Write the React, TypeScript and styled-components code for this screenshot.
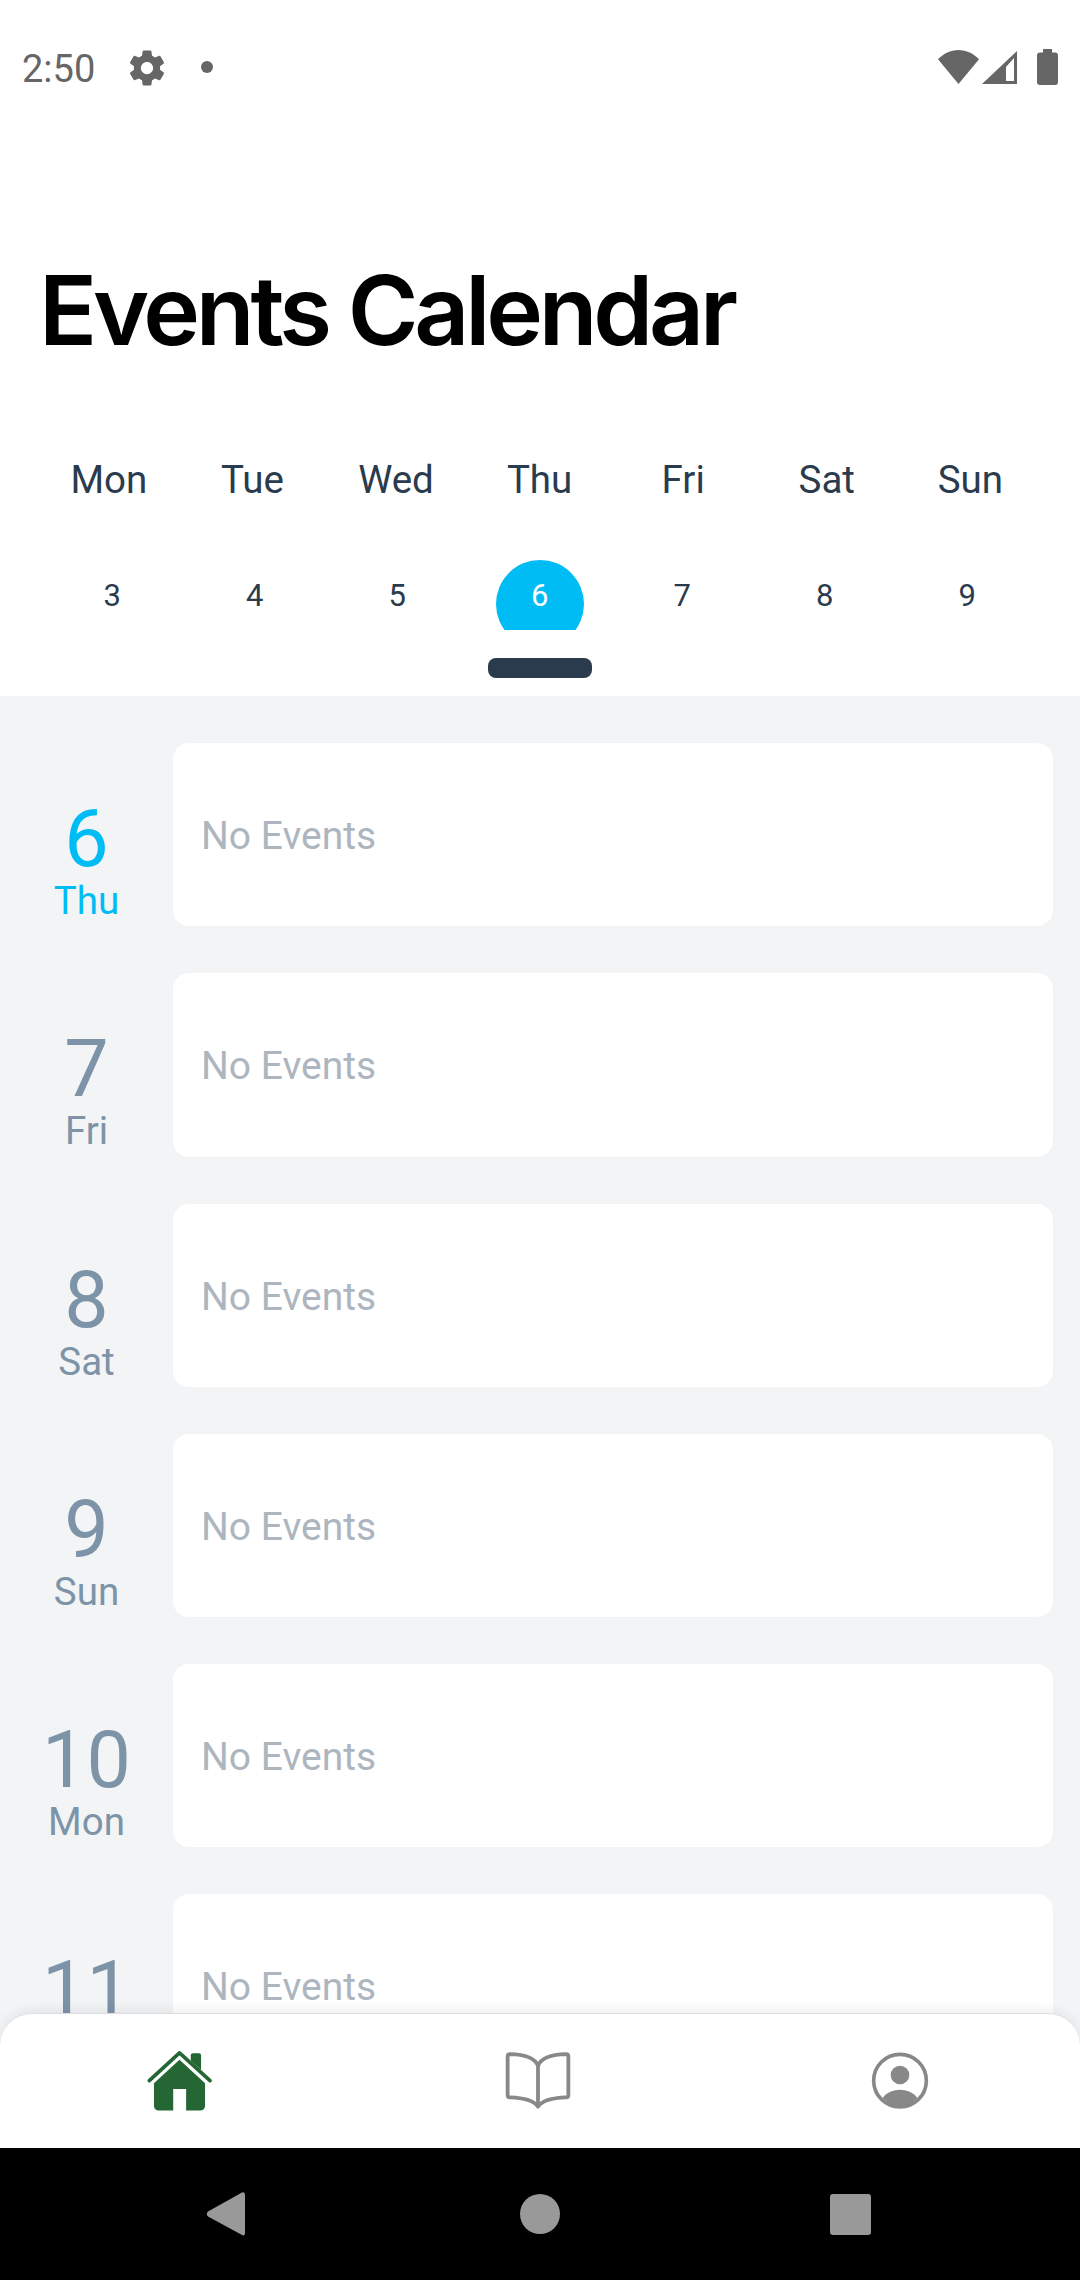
import React from 'react';
import styled, { createGlobalStyle } from 'styled-components';

const GlobalStyle = createGlobalStyle`
  html, body {
    margin: 0;
    padding: 0;
    background: #fff;
  }
  * {
    box-sizing: border-box;
  }
`;

const Screen = styled.div`
  width: 1080px;
  height: 2280px;
  display: flex;
  flex-direction: column;
  overflow: hidden;
  background: #fff;
  font-family: Roboto, 'Liberation Sans', sans-serif;
`;

const StatusBar = styled.div`
  height: 136px;
  flex: none;
  display: flex;
  align-items: flex-start;
  padding: 50px 22px 0 22px;
`;

const Clock = styled.span`
  font-size: 38px;
  line-height: 38px;
  width: 103.5px;
  color: #666;
`;

const StatusDot = styled.span`
  width: 12px;
  height: 12px;
  margin: 11px 0 0 33.5px;
  border-radius: 50%;
  background: #666;
`;

const StatusRight = styled.div`
  margin-left: auto;
  display: flex;
`;

const Glyph = styled.svg<{ $left?: number; $top?: number }>`
  display: block;
  flex: none;
  fill: #666;
  margin-left: ${(p) => p.$left ?? 0}px;
  margin-top: ${(p) => p.$top ?? 0}px;
`;

const Header = styled.header`
  height: 560px;
  flex: none;
  display: flex;
  flex-direction: column;
`;

const Title = styled.h1`
  margin: 0;
  padding: 126px 0 0 39px;
  font-family: Inter, 'Liberation Sans', sans-serif;
  font-size: 96px;
  line-height: 96px;
  font-weight: 600;
  letter-spacing: -4.2px;
  color: #000;
  white-space: nowrap;
`;

const WeekRow = styled.div`
  display: grid;
  grid-template-columns: repeat(7, 143.6px);
  padding-left: 37px;
  height: 82px;
  margin-top: 81px;
  align-items: center;
`;

const WeekLabel = styled.span`
  text-align: center;
  font-size: 38.5px;
  line-height: 44px;
  color: #2a3b4d;
`;

const DateRow = styled.div`
  display: grid;
  grid-template-columns: repeat(7, 142.5px);
  padding-left: 41px;
  margin-top: 39px;
  height: 70px;
`;

const DateCell = styled.div`
  position: relative;
  display: flex;
  justify-content: center;
  align-items: center;
  height: 70px;
  overflow: hidden;
`;

const TodayDisc = styled.span`
  position: absolute;
  top: 0;
  left: 50%;
  width: 88px;
  height: 88px;
  margin-left: -44px;
  border-radius: 50%;
  background: #00bcf5;
`;

const DateNumber = styled.span<{ $today?: boolean }>`
  position: relative;
  font-size: 31px;
  line-height: 36px;
  margin-top: 2px;
  color: ${(p) => (p.$today ? '#fff' : '#2a3b4d')};
`;

const Indicator = styled.div`
  width: 104px;
  height: 20px;
  margin: 28px 0 0 488px;
  border-radius: 8px;
  background: #2a3b4d;
`;

const List = styled.main`
  flex: 1;
  min-height: 0;
  overflow: hidden;
  background: #f2f4f6;
  padding: 47px 27px 0 0;
  display: flex;
  flex-direction: column;
  gap: 47px;
`;

const Row = styled.section`
  display: flex;
  flex: none;
  height: 183.25px;
`;

const DateBlock = styled.div<{ $today?: boolean }>`
  width: 173px;
  flex: none;
  display: flex;
  flex-direction: column;
  align-items: center;
  padding-top: 65px;
  color: ${(p) => (p.$today ? '#00bcf5' : '#7d93a8')};
`;

const DayOfMonth = styled.span`
  font-size: 79px;
  line-height: 62px;
`;

const DayName = styled.span`
  font-size: 38.5px;
  line-height: 42px;
  margin-top: 10px;
`;

const Card = styled.div`
  flex: 1;
  display: flex;
  align-items: center;
  padding: 3px 0 0 28px;
  border-radius: 16px;
  background: #fff;
  font-size: 39px;
  color: #adb6bf;
`;

const TabBar = styled.nav`
  height: 135px;
  flex: none;
  margin-top: -40px;
  position: relative;
  display: grid;
  grid-template-columns: 360px 360px 360px;
  align-items: start;
  padding-top: 36px;
  border-radius: 32px 32px 0 0;
  border-top: 1px solid #dcdee0;
  background: #fff;
  box-shadow: 0 -3px 12px rgba(0, 0, 0, 0.07);
`;

const TabSlot = styled.div<{ $x?: number; $y?: number }>`
  display: flex;
  justify-content: center;
  transform: translate(${(p) => p.$x ?? 0}px, ${(p) => p.$y ?? 0}px);
`;

const NavBar = styled.div`
  height: 132px;
  flex: none;
  position: relative;
  background: #000;
  display: grid;
  grid-template-columns: repeat(3, 314px);
  justify-content: center;
  align-items: center;
  justify-items: center;
`;

const NavCircle = styled.span`
  width: 40px;
  height: 40px;
  border-radius: 50%;
  background: #999;
`;

const NavSquare = styled.span`
  width: 41px;
  height: 41px;
  margin-right: 8px;
  border-radius: 3px;
  background: #999;
`;

const GearIcon = () => (
  <Glyph width="42" height="42" viewBox="0 0 24 24" $top={-3.5}>
    <path d="M19.43 12.98c.04-.32.07-.64.07-.98s-.03-.66-.07-.98l2.11-1.65c.19-.15.24-.42.12-.64l-2-3.46c-.12-.22-.39-.3-.61-.22l-2.49 1c-.52-.4-1.08-.73-1.69-.98l-.38-2.65C14.46 2.18 14.25 2 14 2h-4c-.25 0-.46.18-.49.42l-.38 2.65c-.61.25-1.17.59-1.69.98l-2.49-1c-.23-.09-.49 0-.61.22l-2 3.46c-.13.22-.07.49.12.64l2.11 1.65c-.04.32-.07.65-.07.98s.03.66.07.98l-2.11 1.65c-.19.15-.24.42-.12.64l2 3.46c.12.22.39.3.61.22l2.49-1c.52.4 1.08.73 1.69.98l.38 2.65c.03.24.24.42.49.42h4c.25 0 .46-.18.49-.42l.38-2.65c.61-.25 1.17-.59 1.69-.98l2.49 1c.23.09.49 0 .61-.22l2-3.46c.12-.22.07-.49-.12-.64l-2.11-1.65zM12 15.5c-1.93 0-3.5-1.57-3.5-3.5s1.57-3.5 3.5-3.5 3.5 1.57 3.5 3.5-1.57 3.5-3.5 3.5z" />
  </Glyph>
);

const WifiIcon = () => (
  <Glyph width="41" height="34" viewBox="0 0 41 34">
    <path d="M0 9.3C5.5 3.5 12.5 0 20.5 0S35.5 3.5 41 9.3L20.5 34z" />
  </Glyph>
);

const SignalIcon = () => (
  <Glyph width="35" height="33" viewBox="0 0 35 33" $left={3} $top={1}>
    <path fillRule="evenodd" d="M35 0V33H0zM24 16 32 7V30H24z" />
  </Glyph>
);

const BatteryIcon = () => (
  <Glyph width="21" height="36" viewBox="0 0 21 36" $left={20} $top={-1}>
    <path d="M6 0h9v3.5h3a3 3 0 0 1 3 3V33a3 3 0 0 1-3 3H3a3 3 0 0 1-3-3V6.5a3 3 0 0 1 3-3h3z" />
  </Glyph>
);

const HomeIcon = () => (
  <svg width="68" height="64" viewBox="80 85 205 192">
    <path d="M215 103a6 6 0 0 1 6-6h19a6 6 0 0 1 6 6v45l-31-28z" fill="#256635" />
    <path d="M90 180 181 96l92 84" fill="none" stroke="#256635" strokeWidth="11" strokeLinecap="round" strokeLinejoin="round" />
    <path
      d="M181 117 104 188v68a14 14 0 0 0 14 14h44v-65h39v65h43a14 14 0 0 0 14-14v-68z"
      fill="#256635"
    />
  </svg>
);

const BookIcon = () => (
  <svg width="66" height="58" viewBox="75 95 200 175" fill="none" stroke="#888" strokeWidth="11.5" strokeLinejoin="round">
    <path d="M175 136C165 112 130 102 90 101Q83 101 83 108V226Q83 232 90 232C125 233 160 238 175 260C190 238 225 233 260 232Q267 232 267 226V108Q267 101 260 101C220 102 185 112 175 136Z" />
    <path d="M175 136V260" />
  </svg>
);

const ProfileIcon = () => (
  <svg width="58" height="58" viewBox="1175 94 174 174">
    <circle cx="1262" cy="180" r="79" fill="none" stroke="#888" strokeWidth="11" />
    <circle cx="1262" cy="163" r="28" fill="#888" />
    <path d="M1210 231C1222 215 1242 207 1262 207S1302 215 1314 231A80 80 0 0 1 1262 260A80 80 0 0 1 1210 231Z" fill="#888" />
  </svg>
);

const BackIcon = () => (
  <svg width="40" height="46" viewBox="0 0 40 46" fill="#999">
    <path d="M36 1.5Q39 .5 39 4V42Q39 45.5 36 44L2 25.5Q-.5 23 2 20.5z" />
  </svg>
);

const WEEK = ['Mon', 'Tue', 'Wed', 'Thu', 'Fri', 'Sat', 'Sun'];
const DATES = [3, 4, 5, 6, 7, 8, 9];
const TODAY = 6;
const AGENDA = [
  { day: 6, name: 'Thu' },
  { day: 7, name: 'Fri' },
  { day: 8, name: 'Sat' },
  { day: 9, name: 'Sun' },
  { day: 10, name: 'Mon' },
  { day: 11, name: 'Tue' },
];

export default function App() {
  return (
    <Screen>
      <GlobalStyle />
      <StatusBar>
        <Clock>2:50</Clock>
        <GearIcon />
        <StatusDot />
        <StatusRight>
          <WifiIcon />
          <SignalIcon />
          <BatteryIcon />
        </StatusRight>
      </StatusBar>

      <Header>
        <Title>Events Calendar</Title>
        <WeekRow>
          {WEEK.map((name) => (
            <WeekLabel key={name}>{name}</WeekLabel>
          ))}
        </WeekRow>
        <DateRow>
          {DATES.map((date) => (
            <DateCell key={date}>
              {date === TODAY && <TodayDisc />}
              <DateNumber $today={date === TODAY}>{date}</DateNumber>
            </DateCell>
          ))}
        </DateRow>
        <Indicator />
      </Header>

      <List>
        {AGENDA.map((item) => (
          <Row key={item.day}>
            <DateBlock $today={item.day === TODAY}>
              <DayOfMonth>{item.day}</DayOfMonth>
              <DayName>{item.name}</DayName>
            </DateBlock>
            <Card>No Events</Card>
          </Row>
        ))}
      </List>

      <TabBar>
        <TabSlot $y={-1}>
          <HomeIcon />
        </TabSlot>
        <TabSlot $x={-2} $y={2}>
          <BookIcon />
        </TabSlot>
        <TabSlot $y={2}>
          <ProfileIcon />
        </TabSlot>
      </TabBar>

      <NavBar>
        <BackIcon />
        <NavCircle />
        <NavSquare />
      </NavBar>
    </Screen>
  );
}
